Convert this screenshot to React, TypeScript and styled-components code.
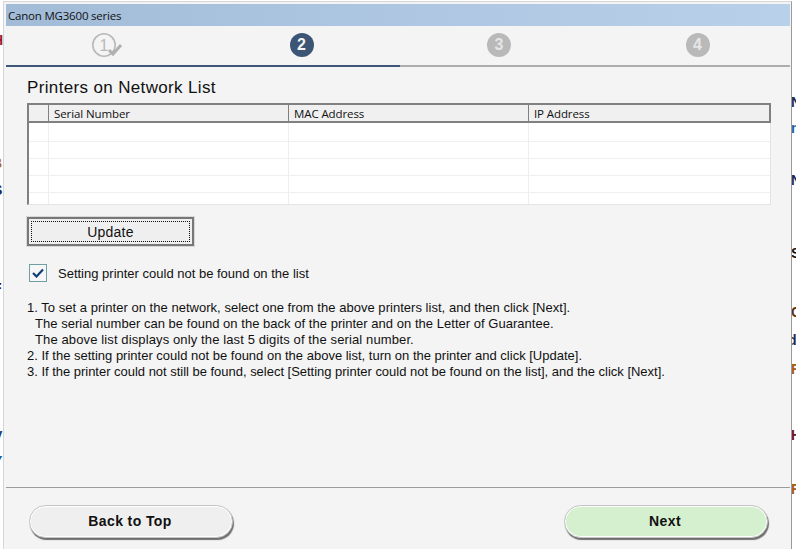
import styled, { createGlobalStyle } from "styled-components"

const GlobalStyle = createGlobalStyle`
  html, body {
    margin: 0;
    padding: 0;
    background: #ffffff;
  }
  * {
    box-sizing: border-box;
  }
`

const Desktop = styled.div`
  position: relative;
  width: 796px;
  height: 549px;
  overflow: hidden;
  background: #ffffff;
  font-family: "Liberation Sans", Arial, sans-serif;
  padding: 1px 0 0 3px;
`

const Fragment = styled.span<{ $x: number; $y: number; $color: string }>`
  position: absolute;
  left: ${(p) => p.$x}px;
  top: ${(p) => p.$y}px;
  font-size: 14px;
  line-height: 16px;
  font-weight: 700;
  color: ${(p) => p.$color};
`

const Window = styled.div`
  position: relative;
  width: 789px;
  height: 548px;
  padding: 2px 1px 0 2px;
  background: #f4f4f4;
  border: solid #d6d6d6;
  border-width: 1px 0 0 1px;
  border-right: 1px solid #9a9a9a;
  display: flex;
  flex-direction: column;
`

const TitleBar = styled.div`
  height: 22px;
  flex: none;
  display: flex;
  align-items: center;
  padding-left: 2px;
  background: linear-gradient(90deg, #a2bcd8, #b9d0ea);
  font-family: "Open Sans", sans-serif;
  font-size: 11.5px;
  letter-spacing: -0.2px;
  color: #111111;
`

const Steps = styled.div`
  height: 41px;
  flex: none;
  display: grid;
  grid-template-columns: 197px 197px 198px 199px;
  border-bottom: 2px solid #adadad;
  position: relative;
`

const Progress = styled.div`
  position: absolute;
  left: 0;
  bottom: -2px;
  width: 394px;
  height: 2px;
  background: #3f5878;
`

const Step = styled.div`
  display: flex;
  align-items: center;
  justify-content: center;
  padding-bottom: 2px;
`

const StepBadge = styled.div<{ $active?: boolean }>`
  width: 24px;
  height: 24px;
  border-radius: 50%;
  display: flex;
  align-items: center;
  justify-content: center;
  font-size: 16px;
  font-weight: 700;
  color: ${(p) => (p.$active ? "#f4f4f4" : "#e6e6e6")};
  background: ${(p) => (p.$active ? "#3d5575" : "#b9b9b9")};
`

const Content = styled.div`
  flex: 1;
  display: flex;
  flex-direction: column;
  padding: 11px 0 0 21px;
`

const Heading = styled.h1`
  margin: 0;
  font-size: 17px;
  line-height: 20px;
  font-weight: 400;
  letter-spacing: 0.35px;
  color: #111111;
`

const Table = styled.div`
  width: 744px;
  margin-top: 5px;
  background: #ffffff;
  border-left: 2px solid #808080;
  border-bottom: 1px solid #e3e3e3;
  border-right: 1px solid #e3e3e3;
`

const Columns = "19px 240px 240px 1fr"

const HeaderRow = styled.div`
  display: grid;
  grid-template-columns: ${Columns};
  height: 20px;
  margin-left: -2px;
  margin-right: -1px;
  background: #f0f0f0;
  border: 2px solid #808080;
`

const HeaderCell = styled.div`
  display: flex;
  align-items: center;
  padding-left: 5px;
  font-family: "Open Sans", sans-serif;
  font-size: 11.5px;
  letter-spacing: -0.1px;
  color: #111111;
  border-left: 1px solid #808080;

  &:first-child {
    border-left: none;
  }
`

const Row = styled.div<{ $height: number }>`
  display: grid;
  grid-template-columns: ${Columns};
  height: ${(p) => p.$height}px;
  border-bottom: 1px solid #efefef;

  &:last-child {
    border-bottom: none;
  }
`

const Cell = styled.div`
  border-left: 1px solid #efefef;

  &:first-child {
    border-left: none;
  }
`

const UpdateButton = styled.button`
  width: 167px;
  height: 29px;
  margin-top: 12px;
  padding: 2px;
  display: block;
  background: #efefef;
  border: 2px solid #787878;
  box-shadow: 0 0 0 1px #d8d8d8;
  font-family: "Liberation Sans", sans-serif;
  font-size: 14px;
  letter-spacing: 0.2px;
  color: #111111;
`

const FocusRing = styled.span`
  display: flex;
  align-items: center;
  justify-content: center;
  height: 100%;
  border: 1px dotted #111111;
`

const CheckRow = styled.label`
  display: flex;
  align-items: center;
  gap: 11px;
  margin: 18px 0 0 2px;
  height: 18px;
  font-size: 13px;
  color: #111111;
`

const CheckBox = styled.span`
  width: 18px;
  height: 18px;
  display: flex;
  align-items: center;
  justify-content: center;
  background: #f7f7f7;
  border: 1px solid #6f9fa3;
`

const Instructions = styled.div`
  margin-top: 18px;
  font-size: 13px;
  line-height: 16px;
  color: #111111;
`

const Line = styled.div<{ $indent?: boolean; $spacing: number }>`
  padding-left: ${(p) => (p.$indent ? 8 : 0)}px;
  letter-spacing: ${(p) => p.$spacing}px;
  white-space: nowrap;
`

const Footer = styled.div`
  flex: none;
  height: 62px;
  padding: 17px 22px 0 23px;
  display: flex;
  justify-content: space-between;
  align-items: flex-start;
  border-top: 1px solid #9c9c9c;
`

const PillButton = styled.button<{ $primary?: boolean }>`
  width: 204px;
  height: 33px;
  padding: 0 2px 2px 0;
  border-radius: 17px;
  border: 1px solid #c4c4c4;
  background: ${(p) => (p.$primary ? "#d5f0cf" : "#efefef")};
  box-shadow: 0 0 0 1px #ffffff inset, 1px 2px 1px #6f6f6f;
  font-family: "Liberation Sans", sans-serif;
  font-size: 14px;
  font-weight: 700;
  letter-spacing: 0.4px;
  color: #111111;
`

const rows = [19, 17, 17, 17, 11]

export default function App() {
  return (
    <Desktop>
      <GlobalStyle />
      <Fragment $x={-7} $y={32} $color="#9c1c1c">H</Fragment>
      <Fragment $x={-8} $y={155} $color="#b5651d">B</Fragment>
      <Fragment $x={-7} $y={182} $color="#1c2a50">S</Fragment>
      <Fragment $x={-7} $y={280} $color="#20103a">F</Fragment>
      <Fragment $x={-7} $y={428} $color="#1c3a70">V</Fragment>
      <Fragment $x={-7} $y={453} $color="#0f5a9c">Y</Fragment>
      <Fragment $x={791} $y={94} $color="#1c2a50">N</Fragment>
      <Fragment $x={791} $y={120} $color="#14649c">n</Fragment>
      <Fragment $x={791} $y={172} $color="#1c2a50">N</Fragment>
      <Fragment $x={791} $y={245} $color="#111111">S</Fragment>
      <Fragment $x={791} $y={304} $color="#5a3010">C</Fragment>
      <Fragment $x={788} $y={332} $color="#1c2a50">d</Fragment>
      <Fragment $x={791} $y={361} $color="#a55a14">F</Fragment>
      <Fragment $x={791} $y={427} $color="#701020">H</Fragment>
      <Fragment $x={791} $y={481} $color="#a55a14">F</Fragment>
      <Window>
        <TitleBar>Canon MG3600 series</TitleBar>
        <Steps>
          <Step>
            <svg width="36" height="28" viewBox="0 0 36 28" fill="none">
              <circle cx="17" cy="14" r="11.2" stroke="#b9b9b9" strokeWidth="1.6" />
              <text x="17" y="19.5" textAnchor="middle" fontFamily="Liberation Sans" fontSize="16" fill="#b9b9b9">1</text>
              <path d="M22 19l4 4 8-9" stroke="#b0b0b0" strokeWidth="3" />
            </svg>
          </Step>
          <Step>
            <StepBadge $active>2</StepBadge>
          </Step>
          <Step>
            <StepBadge>3</StepBadge>
          </Step>
          <Step>
            <StepBadge>4</StepBadge>
          </Step>
          <Progress />
        </Steps>
        <Content>
          <Heading>Printers on Network List</Heading>
          <Table>
            <HeaderRow>
              <HeaderCell />
              <HeaderCell>Serial Number</HeaderCell>
              <HeaderCell>MAC Address</HeaderCell>
              <HeaderCell>IP Address</HeaderCell>
            </HeaderRow>
            {rows.map((height, i) => (
              <Row key={i} $height={height}>
                <Cell />
                <Cell />
                <Cell />
                <Cell />
              </Row>
            ))}
          </Table>
          <UpdateButton>
            <FocusRing>Update</FocusRing>
          </UpdateButton>
          <CheckRow>
            <CheckBox>
              <svg width="12" height="10" viewBox="0 0 12 10" fill="none">
                <path d="M1 5l3.5 3.5L11 1.5" stroke="#0f3f73" strokeWidth="2.2" />
              </svg>
            </CheckBox>
            Setting printer could not be found on the list
          </CheckRow>
          <Instructions>
            <Line $spacing={0.03}>1. To set a printer on the network, select one from the above printers list, and then click [Next].</Line>
            <Line $indent $spacing={0.03}>The serial number can be found on the back of the printer and on the Letter of Guarantee.</Line>
            <Line $indent $spacing={0.12}>The above list displays only the last 5 digits of the serial number.</Line>
            <Line $spacing={0}>2. If the setting printer could not be found on the above list, turn on the printer and click [Update].</Line>
            <Line $spacing={-0.02}>3. If the printer could not still be found, select [Setting printer could not be found on the list], and the click [Next].</Line>
          </Instructions>
        </Content>
        <Footer>
          <PillButton>Back to Top</PillButton>
          <PillButton $primary>Next</PillButton>
        </Footer>
      </Window>
    </Desktop>
  )
}
